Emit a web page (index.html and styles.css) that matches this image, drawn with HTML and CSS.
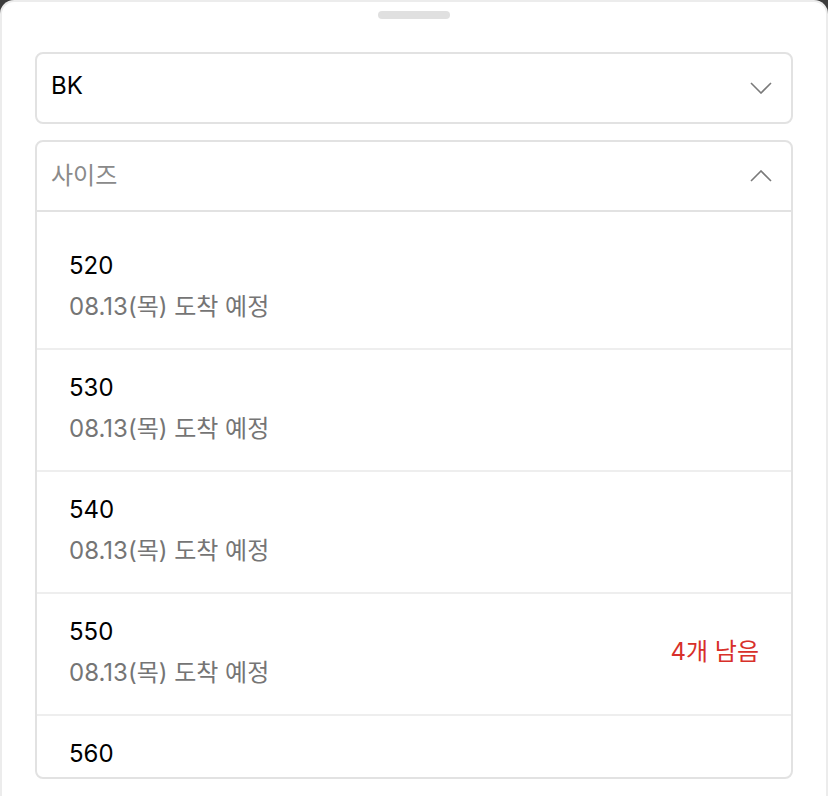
FILE: index.html
```html
<!DOCTYPE html>
<html lang="ko">
<head>
    <meta charset="UTF-8">
    <meta name="viewport" content="width=device-width, initial-scale=1.0">
    <title>옵션 선택</title>
    <link rel="stylesheet" href="styles.css">
</head>
<body>
    <div class="sheet">
        <div class="handle"></div>

        <div class="select">
            <div class="select-head">
                <span class="select-value">BK</span>
                <svg class="chevron" width="22" height="12" viewBox="0 0 22 12"><path d="M1 1 L11 11 L21 1" fill="none" stroke="#7a7a7a" stroke-width="1.6"/></svg>
            </div>
        </div>

        <div class="select open">
            <div class="select-head">
                <span class="select-placeholder">사이즈</span>
                <svg class="chevron" width="22" height="12" viewBox="0 0 22 12"><path d="M1 11 L11 1 L21 11" fill="none" stroke="#7a7a7a" stroke-width="1.6"/></svg>
            </div>
            <ul class="options">
                <li class="option">
                    <div class="option-info">
                        <span class="size">520</span>
                        <span class="arrival">08.13(목) 도착 예정</span>
                    </div>
                </li>
                <li class="option">
                    <div class="option-info">
                        <span class="size">530</span>
                        <span class="arrival">08.13(목) 도착 예정</span>
                    </div>
                </li>
                <li class="option">
                    <div class="option-info">
                        <span class="size">540</span>
                        <span class="arrival">08.13(목) 도착 예정</span>
                    </div>
                </li>
                <li class="option">
                    <div class="option-info">
                        <span class="size">550</span>
                        <span class="arrival">08.13(목) 도착 예정</span>
                    </div>
                    <span class="stock">4개 남음</span>
                </li>
                <li class="option last">
                    <div class="option-info">
                        <span class="size">560</span>
                    </div>
                </li>
            </ul>
        </div>
    </div>
</body>
</html>
```

FILE: styles.css
```css
body {
    margin: 0;
    padding: 0;
    background: #3c3c3c;
    font-family: 'Inter', 'Noto Sans CJK KR', sans-serif;
    height: 796px;
    overflow: hidden;
}
.sheet {
    background-color: #fff;
    border: 2px solid #ececec;
    border-bottom: none;
    border-radius: 14px 14px 0 0;
    height: 820px;
    padding: 0 33px;
    box-sizing: border-box;
}
.handle {
    width: 72px;
    height: 8px;
    margin: 9px auto 0;
    border-radius: 4px;
    background-color: #e0e0e0;
}
.select {
    border: 2px solid #e2e2e2;
    border-radius: 8px;
    margin-top: 33px;
}
.select.open {
    margin-top: 16px;
    height: 639px;
    overflow: hidden;
    box-sizing: border-box;
}
.select-head {
    display: flex;
    justify-content: space-between;
    align-items: center;
    height: 68px;
    padding: 0 19px 0 14px;
}
.select.open .select-head {
    border-bottom: 2px solid #e2e2e2;
}
.select-value,
.select-placeholder {
    font-size: 24px;
    margin-top: -6px;
}
.select-value {
    color: #000;
}
.select-placeholder {
    color: #8a8a8a;
}
.chevron {
    display: block;
}
.options {
    list-style: none;
    margin: 0;
    padding: 16px 0 0;
}
.option {
    display: flex;
    justify-content: space-between;
    align-items: center;
    height: 120px;
    padding: 0 32px;
    border-bottom: 2px solid #eeeeee;
}
.option.last {
    align-items: flex-start;
    padding-top: 27px;
    box-sizing: border-box;
    border-bottom: none;
}
.option-info {
    display: flex;
    flex-direction: column;
    gap: 7px;
    margin-top: -4px;
}
.size {
    font-size: 24px;
    color: #000;
}
.arrival {
    font-size: 24px;
    color: #757575;
}
.stock {
    font-size: 24px;
    color: #d8302a;
    margin-top: -10px;
}
```
